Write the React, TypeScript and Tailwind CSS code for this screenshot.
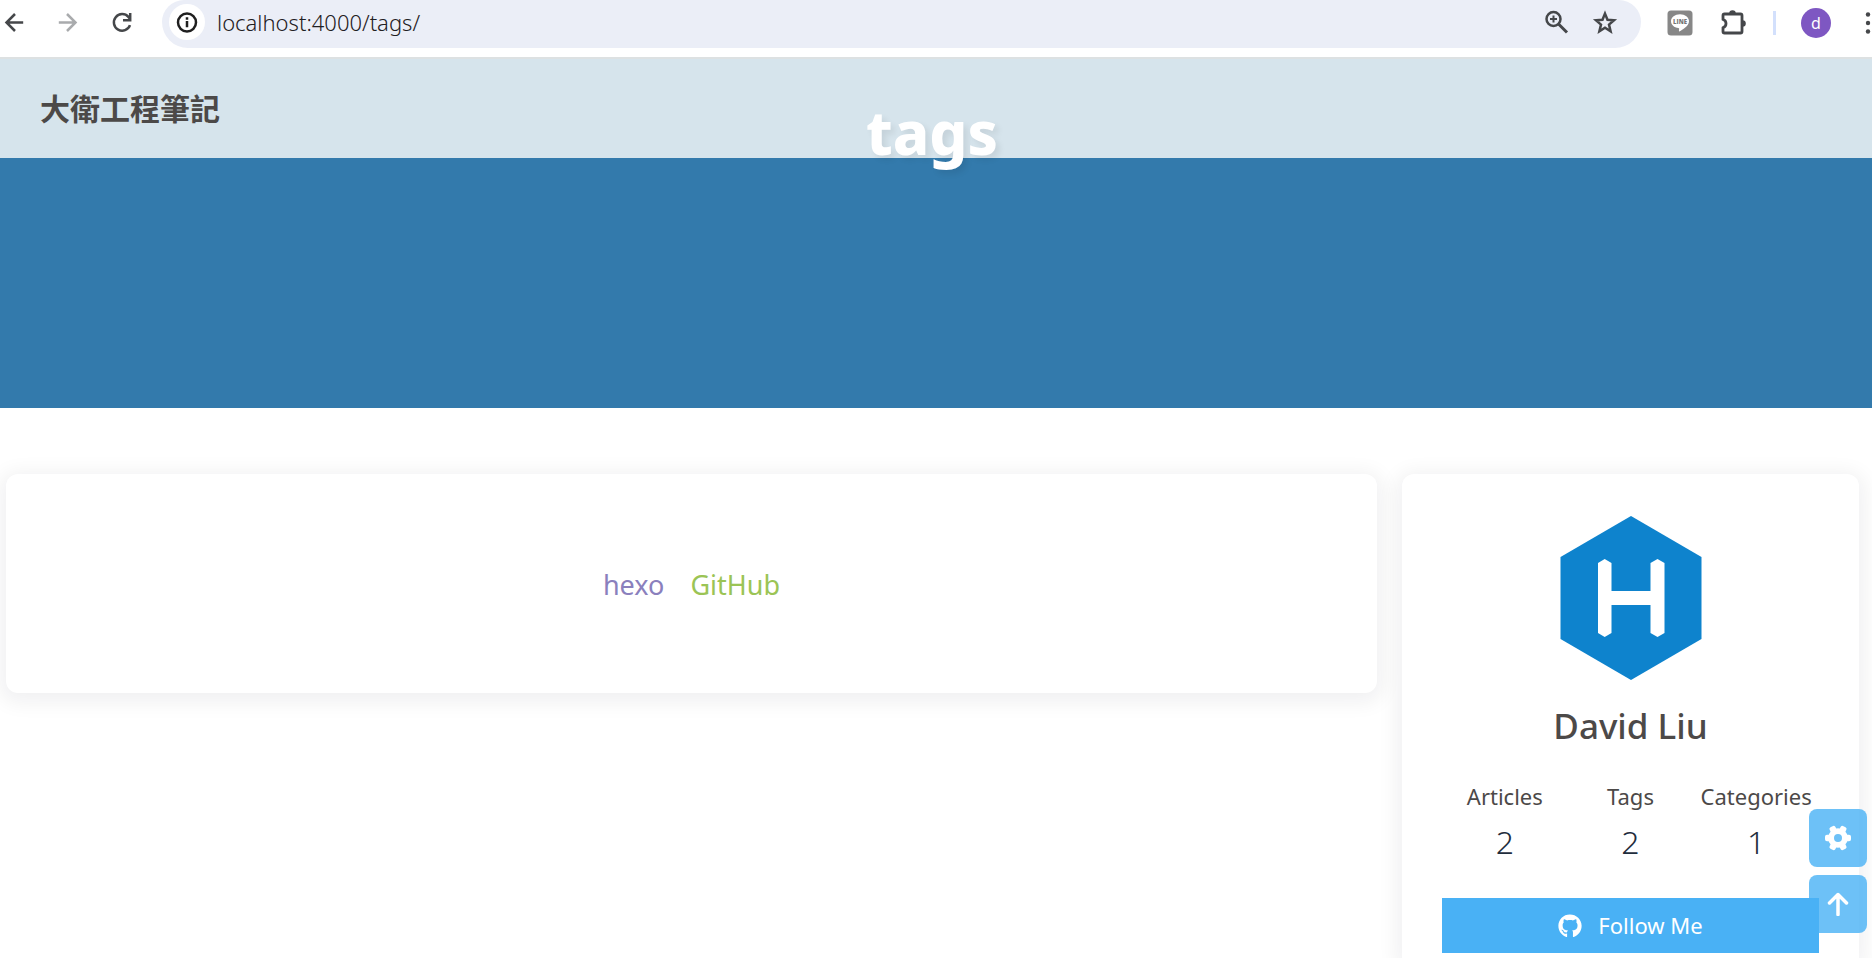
import type { ReactNode } from "react";
import { FaGithub } from "react-icons/fa";

function StrokeIcon({ children }: { children: ReactNode }) {
  return (
    <svg
      viewBox="0 0 28 28"
      className="size-7"
      fill="none"
      stroke="currentColor"
      strokeWidth="2.5"
      aria-hidden="true"
    >
      {children}
    </svg>
  );
}

function LineIcon() {
  return (
    <svg viewBox="0 0 26 26" className="size-[26px]" aria-hidden="true">
      <rect x="0.5" y="0.5" width="25" height="25" rx="3.5" fill="#878787" />
      <path
        d="M13 4.2c-5 0-9 3.1-9 7 0 3.5 3.2 6.3 7.4 6.9.7.1.8.5.7 1.1l-.2 1.8c0 .5.3.6.8.3 2.5-1.5 9.3-5.2 9.3-10.1 0-3.9-4-7-9-7z"
        fill="#fff"
      />
      <text
        x="13"
        y="13.6"
        textAnchor="middle"
        fontSize="6"
        fontWeight="800"
        fill="#777"
        fontFamily="Open Sans, sans-serif"
      >
        LINE
      </text>
    </svg>
  );
}

function PuzzleIcon() {
  return (
    <svg viewBox="0 0 30 28" className="h-7 w-[30px]" aria-hidden="true">
      <path
        d="M6.5 5H22.5Q24 5 24 6.5V22.5Q24 24 22.5 24H6.5Q5 24 5 22.5V18.5C9 17.5 9 11.5 5 10.5V6.5Q5 5 6.5 5Z"
        fill="none"
        stroke="#45474a"
        strokeWidth="2.8"
        strokeLinejoin="round"
      />
      <path d="M11.2 4.5a3.3 3.3 0 0 1 6.6 0zM24.5 11.2a3.3 3.3 0 0 1 0 6.6z" fill="#45474a" />
    </svg>
  );
}

function GearIcon() {
  return (
    <svg viewBox="0 0 28 28" className="size-7" aria-hidden="true">
      <g fill="currentColor" stroke="currentColor" strokeWidth="2" strokeLinejoin="round">
        <circle cx="14" cy="14" r="8.8" />
        <rect x="2" y="11.8" width="24" height="4.4" rx="1" />
        <rect x="2" y="11.8" width="24" height="4.4" rx="1" transform="rotate(60 14 14)" />
        <rect x="2" y="11.8" width="24" height="4.4" rx="1" transform="rotate(120 14 14)" />
      </g>
      <circle cx="14" cy="14" r="4" fill="#6dc1f7" />
    </svg>
  );
}

function HexoLogo() {
  return (
    <svg viewBox="0 0 164 164" className="size-[164px]" role="img" aria-label="Avatar">
      <polygon points="82,0 152.5,41 152.5,123 82,164 11.5,123 11.5,41" fill="#0e83cd" />
      <path
        d="M49 47L55.7 43L62.5 47V75H101.5V47L108.5 43L115.5 47V117L108.5 121L101.5 117V89H62.5V117L55.7 121L49 117Z"
        fill="#fff"
      />
    </svg>
  );
}

function Toolbar() {
  return (
    <div className="flex h-[59px] items-start gap-[26px] overflow-hidden border-b-2 border-[#dde1e2] bg-white text-[#45474a]">
      <div className="flex h-11 items-center gap-[26px]">
        <button aria-label="Back">
          <StrokeIcon>
            <path d="M23.2 14.5H6.5M15 6L6.5 14.5L15 23" />
          </StrokeIcon>
        </button>
        <button aria-label="Forward" className="text-[#a9abad]">
          <StrokeIcon>
            <path d="M4.8 14.5H21.5M13 6L21.5 14.5L13 23" />
          </StrokeIcon>
        </button>
        <button aria-label="Reload">
          <StrokeIcon>
            <path d="M22 17.2A8.3 8.3 0 1 1 20.4 8.9L22 11M22.2 5V12.3H15" />
          </StrokeIcon>
        </button>
      </div>
      <div className="flex h-12 flex-1 items-center rounded-t-[22px] rounded-b-[26px] bg-[#ebeef7] pr-[22px] pb-1 pl-[7px]">
        <button
          aria-label="Site information"
          className="flex size-9 items-center justify-center rounded-full bg-white text-[#1f1f1f]"
        >
          <StrokeIcon>
            <circle cx="14" cy="14.5" r="9" />
            <path d="M14 13V19.3M14 9.3V11.7" />
          </StrokeIcon>
        </button>
        <input
          aria-label="Address"
          defaultValue="localhost:4000/tags/"
          className="ml-3 min-w-0 flex-1 bg-transparent text-[22px] font-light text-[#1f2023] outline-none"
        />
        <div className="flex gap-5">
          <button aria-label="Zoom">
            <StrokeIcon>
              <circle cx="10.5" cy="11" r="7" />
              <path d="M15.5 16L24 24.5" strokeWidth="3" />
              <path d="M10.5 7.5V14.5M7 11H14" strokeWidth="2" />
            </StrokeIcon>
          </button>
          <button aria-label="Bookmark this page">
            <StrokeIcon>
              <path d="M14 5.6L16.5 11.8L23 12.3L18 16.6L19.6 23.2L14 19.7L8.4 23.2L10 16.6L5 12.3L11.5 11.8Z" />
            </StrokeIcon>
          </button>
        </div>
      </div>
      <div className="flex h-[46px] items-center gap-[25px]">
        <button aria-label="LINE">
          <LineIcon />
        </button>
        <button aria-label="Extensions">
          <PuzzleIcon />
        </button>
        <span className="h-6 w-[3px] bg-[#d3e0fc]" />
        <button
          aria-label="Profile"
          className="flex size-[30px] items-center justify-center rounded-full bg-[#7e57c2] text-base leading-none text-white"
        >
          d
        </button>
        <button aria-label="Menu" className="flex w-4 justify-end">
          <svg viewBox="0 0 8 24" className="h-6 w-2" fill="#45474a" aria-hidden="true">
            <circle cx="4" cy="3.5" r="2.2" />
            <circle cx="4" cy="12" r="2.2" />
            <circle cx="4" cy="20.5" r="2.2" />
          </svg>
        </button>
      </div>
    </div>
  );
}

const stats = [
  { label: "Articles", value: 2 },
  { label: "Tags", value: 2 },
  { label: "Categories", value: 1 },
];

function ProfileCard() {
  return (
    <aside className="flex flex-col items-center rounded-t-xl bg-white px-10 pt-[42px] shadow-[0_4px_20px_6px_rgba(7,17,27,0.06)]">
      <HexoLogo />
      <h2 className="mt-[18px] text-[35px] leading-[56px] font-medium text-[#4c4948]">David Liu</h2>
      <div className="mt-[26px] grid w-full grid-cols-3">
        {stats.map((s) => (
          <a key={s.label} href="#" className="flex flex-col items-center">
            <span className="text-[22px] leading-[32px] text-[#4c4948]">{s.label}</span>
            <span className="mt-2 text-[32px] leading-[44px] font-light text-[#1f2d3d]">{s.value}</span>
          </a>
        ))}
      </div>
      <a
        href="#"
        className="relative z-20 mt-[34px] flex h-[55px] w-full items-center justify-center gap-4 bg-[#49b1f5] text-[22px] text-white"
      >
        <FaGithub className="size-6" />
        Follow Me
      </a>
    </aside>
  );
}

export default function App() {
  return (
    <div className="flex min-h-screen flex-col overflow-hidden bg-white font-['Noto_Sans','Noto_Sans_CJK_TC',sans-serif]">
      <Toolbar />
      <header className="grid h-[349px] bg-[#337aac]">
        <nav className="col-start-1 row-start-1 flex h-[99px] items-center bg-[#d6e4ec] px-10">
          <a href="#" className="text-[30px] font-bold text-[#4c4948]">
            大衛工程筆記
          </a>
        </nav>
        <h1 className="col-start-1 row-start-1 justify-self-center pt-[30px] pr-2 text-[60px] leading-[86px] font-extrabold text-white [text-shadow:4px_4px_6px_rgba(0,0,0,0.08)]">
          tags
        </h1>
      </header>
      <div className="grid flex-1 grid-cols-[3fr_1fr] gap-[25px] pt-[66px] pr-[13px] pl-1.5">
        <main className="flex h-[219px] items-center justify-center gap-[26px] self-start rounded-xl bg-white pt-1 text-[27px] shadow-[0_4px_20px_6px_rgba(7,17,27,0.06)]">
          <a href="#" className="text-[#8a80bd]">
            hexo
          </a>
          <a href="#" className="text-[#9bc455]">
            GitHub
          </a>
        </main>
        <ProfileCard />
      </div>
      <div className="fixed right-[5px] bottom-[25px] z-10 flex flex-col gap-2 text-white">
        <button
          aria-label="Settings"
          className="flex size-[58px] items-center justify-center rounded-lg bg-[#49b1f5]/80"
        >
          <GearIcon />
        </button>
        <button
          aria-label="Back to top"
          className="flex size-[58px] items-center justify-center rounded-lg bg-[#49b1f5]/80"
        >
          <svg viewBox="0 0 24 24" className="size-6" fill="none" stroke="currentColor" strokeWidth="3.5" aria-hidden="true">
            <path d="M12 22.5V3M3.5 11L12 2.5L20.5 11" strokeLinecap="round" strokeLinejoin="round" />
          </svg>
        </button>
      </div>
    </div>
  );
}
